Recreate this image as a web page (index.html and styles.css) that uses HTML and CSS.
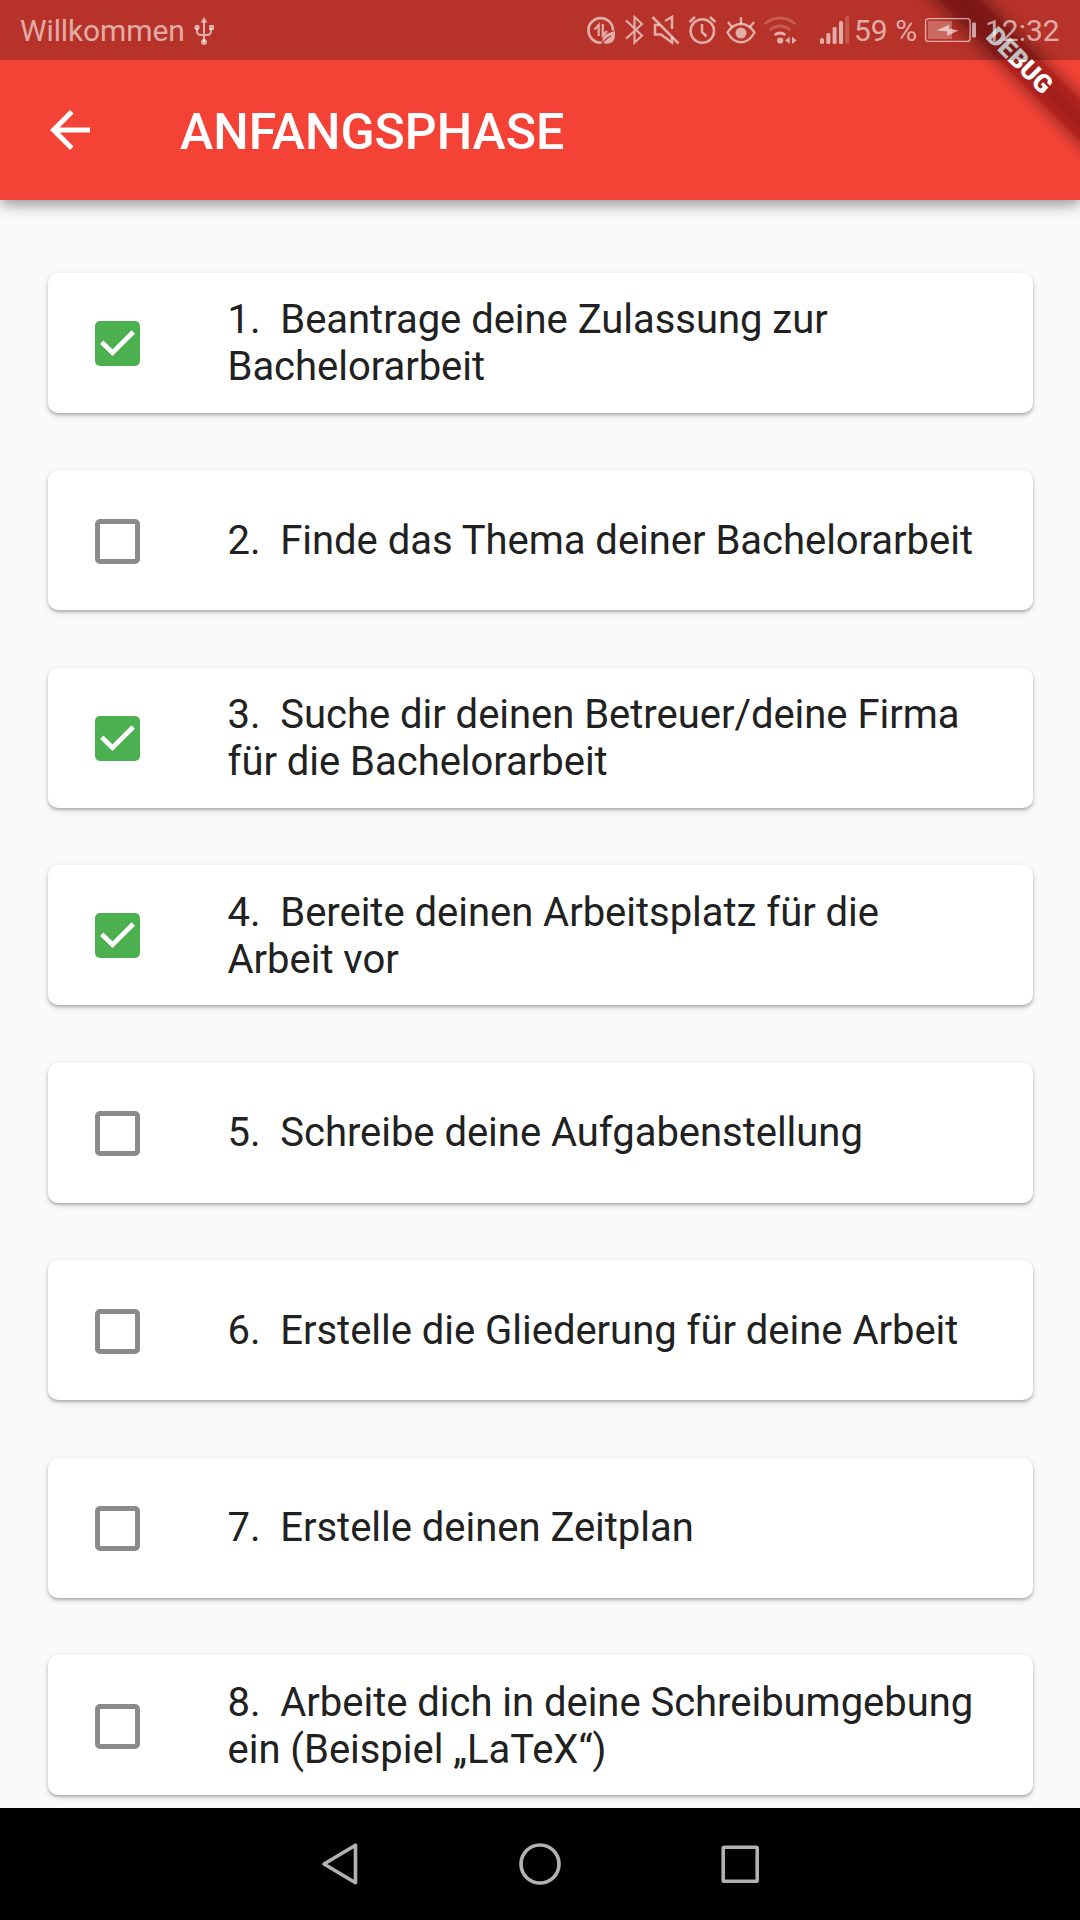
FILE: index.html
```html
<!DOCTYPE html>
<html lang="de">
<head>
<meta charset="utf-8">
<title>Anfangsphase</title>
<link rel="stylesheet" href="styles.css">
</head>
<body>
<div class="screen">
  <header class="top">
    <div class="status">
      <span class="carrier">Willkommen</span>
      <svg class="icon usb" width="22" height="60" viewBox="193 0 22 60"><path d="M204 21v21M197 28v3q0 4 4 4h6q4 0 4-4v-3" fill="none" stroke="currentColor" stroke-width="2"/><path d="M204 17l3.500 5.500h-7zM209 25h5v5h-5z" fill="currentColor"/><circle cx="197" cy="27.500" r="2.700" fill="currentColor"/><circle cx="204" cy="42" r="3" fill="currentColor"/></svg>
      <div class="indicators">
        <svg class="icon" width="38" height="60" viewBox="584 0 38 60"><path d="M601.500 42.600A12.300 12.300 0 1 1 613 30.500" fill="none" stroke="currentColor" stroke-width="2.700"/><path d="M598.700 36V25l-4.200 4.500M602.800 24v11.500l4.200-4.500" fill="none" stroke="currentColor" stroke-width="2.200"/><path d="M615 31c.5 8-1 12.500-8.500 12.700-2.500 0-4.500-1-4-4 1-6 6-6.500 12.500-8.700z" fill="currentColor"/><path d="M602 44q4-6 9-8" fill="none" stroke="#b73229" stroke-width="1.200"/></svg>
        <svg class="icon" width="27" height="60" viewBox="622 0 27 60"><path d="M626 20.500l16 15-7.500 7.200V17l7.500 7-16 14.800" fill="none" stroke="currentColor" stroke-width="2.200"/></svg>
        <svg class="icon" width="36" height="60" viewBox="649 0 36 60"><path d="M659.500 25H655v9.500h6l11 8V37M665 21l7-4v12" fill="none" stroke="currentColor" stroke-width="2.500"/><path d="M652.500 17l26 26.500" stroke="currentColor" stroke-width="2.500"/></svg>
        <svg class="icon" width="37" height="60" viewBox="685 0 37 60"><circle cx="702.300" cy="31" r="11.700" fill="none" stroke="currentColor" stroke-width="2.500"/><path d="M702 24v8l4.500 4.500M689.500 22l5.500-5M715.500 22l-5.500-5" fill="none" stroke="currentColor" stroke-width="2.500"/></svg>
        <svg class="icon" width="38" height="60" viewBox="722 0 38 60"><path d="M727.500 32.500q5.500-8.500 13.500-8.500t13.500 8.500q-5.500 9.800-13.500 9.800t-13.500-9.800z" fill="none" stroke="currentColor" stroke-width="2.400"/><circle cx="741" cy="33" r="5.500" fill="currentColor"/><path d="M741 17v7M728 22l4 5M754 22l-4 5" stroke="currentColor" stroke-width="2.400"/></svg>
        <svg class="icon" width="56" height="60" viewBox="760 0 56 60"><g fill="none" stroke="currentColor" stroke-width="2.700"><path d="M764.500 24q15.500-12 31 0" opacity=".35"/><path d="M769.500 30q10.500-8 21 0" opacity=".35"/><path d="M774.500 35q5.500-4 11 0"/></g><circle cx="780.200" cy="40.500" r="3.100" fill="currentColor"/><path d="M789.700 36.500v7.500l-4.500-3.500zM792 36.500v7.500l4.500-3.500z" fill="currentColor"/></svg>
        <svg class="icon" width="38" height="60" viewBox="816 0 38 60"><g fill="currentColor"><rect x="820" y="38" width="4" height="6" rx="1.800"/><rect x="826.300" y="33" width="4" height="11" rx="1.500"/><rect x="832.600" y="27" width="4" height="17" rx="1.500"/><rect x="839" y="21" width="4" height="23" rx="1.500"/><rect x="845.200" y="16" width="4" height="28" rx="1.500" opacity=".3"/></g></svg>
        <span class="charge">59 %</span>
        <svg class="icon" width="58" height="60" viewBox="922 0 58 60"><rect x="925.600" y="18.600" width="44.500" height="22.800" rx="3" fill="none" stroke="currentColor" stroke-width="1.400"/><rect x="928" y="21" width="24" height="18" fill="currentColor" opacity=".45"/><path d="M936.500 30.500l13-6-.5 4 9.500 2-11.500 5.500.5-4.500z" fill="currentColor"/><rect x="972" y="22.500" width="4" height="15" rx="1.200" fill="currentColor"/></svg>
        <span class="clock">12:32</span>
      </div>
    </div>
    <div class="appbar">
      <svg class="back" width="60" height="60" viewBox="0 0 24 24"><path d="M20 11H7.830l5.590-5.590L12 4l-8 8 8 8 1.410-1.410L7.830 13H20v-2z" fill="#fff"/></svg>
      <h1 class="title">ANFANGSPHASE</h1>
    </div>
    <div class="corner"><div class="ribbon-shadow"></div><div class="ribbon">DEBUG</div></div>
  </header>

  <main class="list">
    <label class="card"><span class="box checked"><svg width="45" height="45" viewBox="0 0 18 18"><path d="M2.700 8.500L7 12.700 15.300 4.400" fill="none" stroke="#fff" stroke-width="1.900"/></svg></span><span class="text">1.  Beantrage deine Zulassung zur Bachelorarbeit</span></label>
    <label class="card"><span class="box"></span><span class="text">2.  Finde das Thema deiner Bachelorarbeit</span></label>
    <label class="card"><span class="box checked"><svg width="45" height="45" viewBox="0 0 18 18"><path d="M2.700 8.500L7 12.700 15.300 4.400" fill="none" stroke="#fff" stroke-width="1.900"/></svg></span><span class="text">3.  Suche dir deinen Betreuer/deine Firma für die Bachelorarbeit</span></label>
    <label class="card"><span class="box checked"><svg width="45" height="45" viewBox="0 0 18 18"><path d="M2.700 8.500L7 12.700 15.300 4.400" fill="none" stroke="#fff" stroke-width="1.900"/></svg></span><span class="text low">4.  Bereite deinen Arbeitsplatz für die Arbeit vor</span></label>
    <label class="card"><span class="box"></span><span class="text">5.  Schreibe deine Aufgabenstellung</span></label>
    <label class="card"><span class="box"></span><span class="text">6.  Erstelle die Gliederung für deine Arbeit</span></label>
    <label class="card"><span class="box"></span><span class="text">7.  Erstelle deinen Zeitplan</span></label>
    <label class="card"><span class="box"></span><span class="text low">8.  Arbeite dich in deine Schreibumgebung ein (Beispiel „LaTeX“)</span></label>
  </main>

  <nav class="navbar">
    <svg width="60" height="60" viewBox="0 0 60 60"><path d="M14 30L45.500 11.200v37.600z" class="nav-shape"/></svg>
    <svg width="60" height="60" viewBox="0 0 60 60"><circle cx="30" cy="30" r="19" class="nav-shape"/></svg>
    <svg width="60" height="60" viewBox="0 0 60 60"><rect x="13.200" y="13.200" width="34" height="34" rx="1" class="nav-shape"/></svg>
  </nav>
</div>
</body>
</html>
```
FILE: styles.css
```css
* {
  box-sizing: border-box;
}

body {
  margin: 0;
  font-family: Roboto, "Liberation Sans", sans-serif;
}

.screen {
  display: flex;
  flex-direction: column;
  width: 1080px;
  height: 1920px;
  overflow: hidden;
  background: #fafafa;
}

.top {
  position: relative;
  z-index: 1;
  flex: none;
  height: 200px;
  background: #f44336;
  box-shadow: 0 5px 10px -2.5px rgba(0, 0, 0, .2), 0 8px 12.5px rgba(0, 0, 0, .14), 0 2.5px 20px rgba(0, 0, 0, .1);
}

.status {
  position: relative;
  z-index: 2;
  display: flex;
  align-items: center;
  height: 60px;
  padding: 0 20px;
  background: rgba(0, 0, 0, .25);
  color: rgba(255, 255, 255, .6);
  font-size: 30px;
  line-height: 60px;
  white-space: nowrap;
}

.icon {
  flex: none;
  display: block;
}

.carrier {
  padding-top: 2px;
  letter-spacing: -.12px;
}

.usb {
  margin-left: 8px;
}

.indicators {
  display: flex;
  margin-left: auto;
}

.charge {
  width: 68px;
  padding-top: 1px;
}

.clock {
  width: 80px;
  padding: 1px 0 0 5px;
}

.appbar {
  display: flex;
  align-items: center;
  height: 140px;
  padding-left: 40px;
}

.title {
  margin: 0 0 0 80px;
  padding-top: 4px;
  color: #fff;
  font-size: 50px;
  font-weight: 500;
  line-height: 58px;
}

.corner {
  position: absolute;
  top: 0;
  right: 0;
  z-index: 1;
  width: 200px;
  height: 200px;
  overflow: hidden;
}

.ribbon,
.ribbon-shadow {
  position: absolute;
  top: 70px;
  left: 100px;
  width: 200px;
  height: 30px;
  transform: rotate(45deg);
  transform-origin: 100px -70px;
}

.ribbon-shadow {
  left: 50px;
  width: 300px;
  transform-origin: 150px -70px;
  background: rgba(0, 0, 0, .5);
  filter: blur(9px);
}

.ribbon {
  background: rgba(183, 28, 28, .63);
  color: #fff;
  font-size: 25.5px;
  font-weight: 900;
  line-height: 30px;
  text-align: center;
}

.list {
  display: flex;
  flex: 1;
  flex-direction: column;
  gap: 57.5px;
  min-height: 0;
  padding: 72.5px 47.5px 0;
}

.card {
  display: flex;
  flex: none;
  align-items: center;
  height: 140px;
  padding: 0 40px 0 47.5px;
  border-radius: 10px;
  background: #fff;
  box-shadow: 0 2px 3px rgba(0, 0, 0, .24), 0 2.5px 7.5px rgba(0, 0, 0, .1);
}

.box {
  flex: none;
  width: 45px;
  height: 45px;
  margin-top: 2px;
  border: 5px solid #8a8a8a;
  border-radius: 5px;
}

.checked {
  margin-top: 1px;
  border: 0;
  background: #4caf50;
}

.checked svg {
  display: block;
}

.text {
  flex: 1;
  margin-left: 87.5px;
  color: #212121;
  font-size: 40px;
  letter-spacing: -.03px;
  line-height: 47px;
  white-space: pre-wrap;
}

.low {
  padding-top: 2px;
}

.navbar {
  display: grid;
  flex: none;
  grid-template-columns: repeat(3, 200px);
  place-content: center;
  place-items: center;
  height: 112px;
  background: #000;
}

.nav-shape {
  fill: none;
  stroke: #b2b2b2;
  stroke-width: 3.600;
  stroke-linejoin: round;
}
```
